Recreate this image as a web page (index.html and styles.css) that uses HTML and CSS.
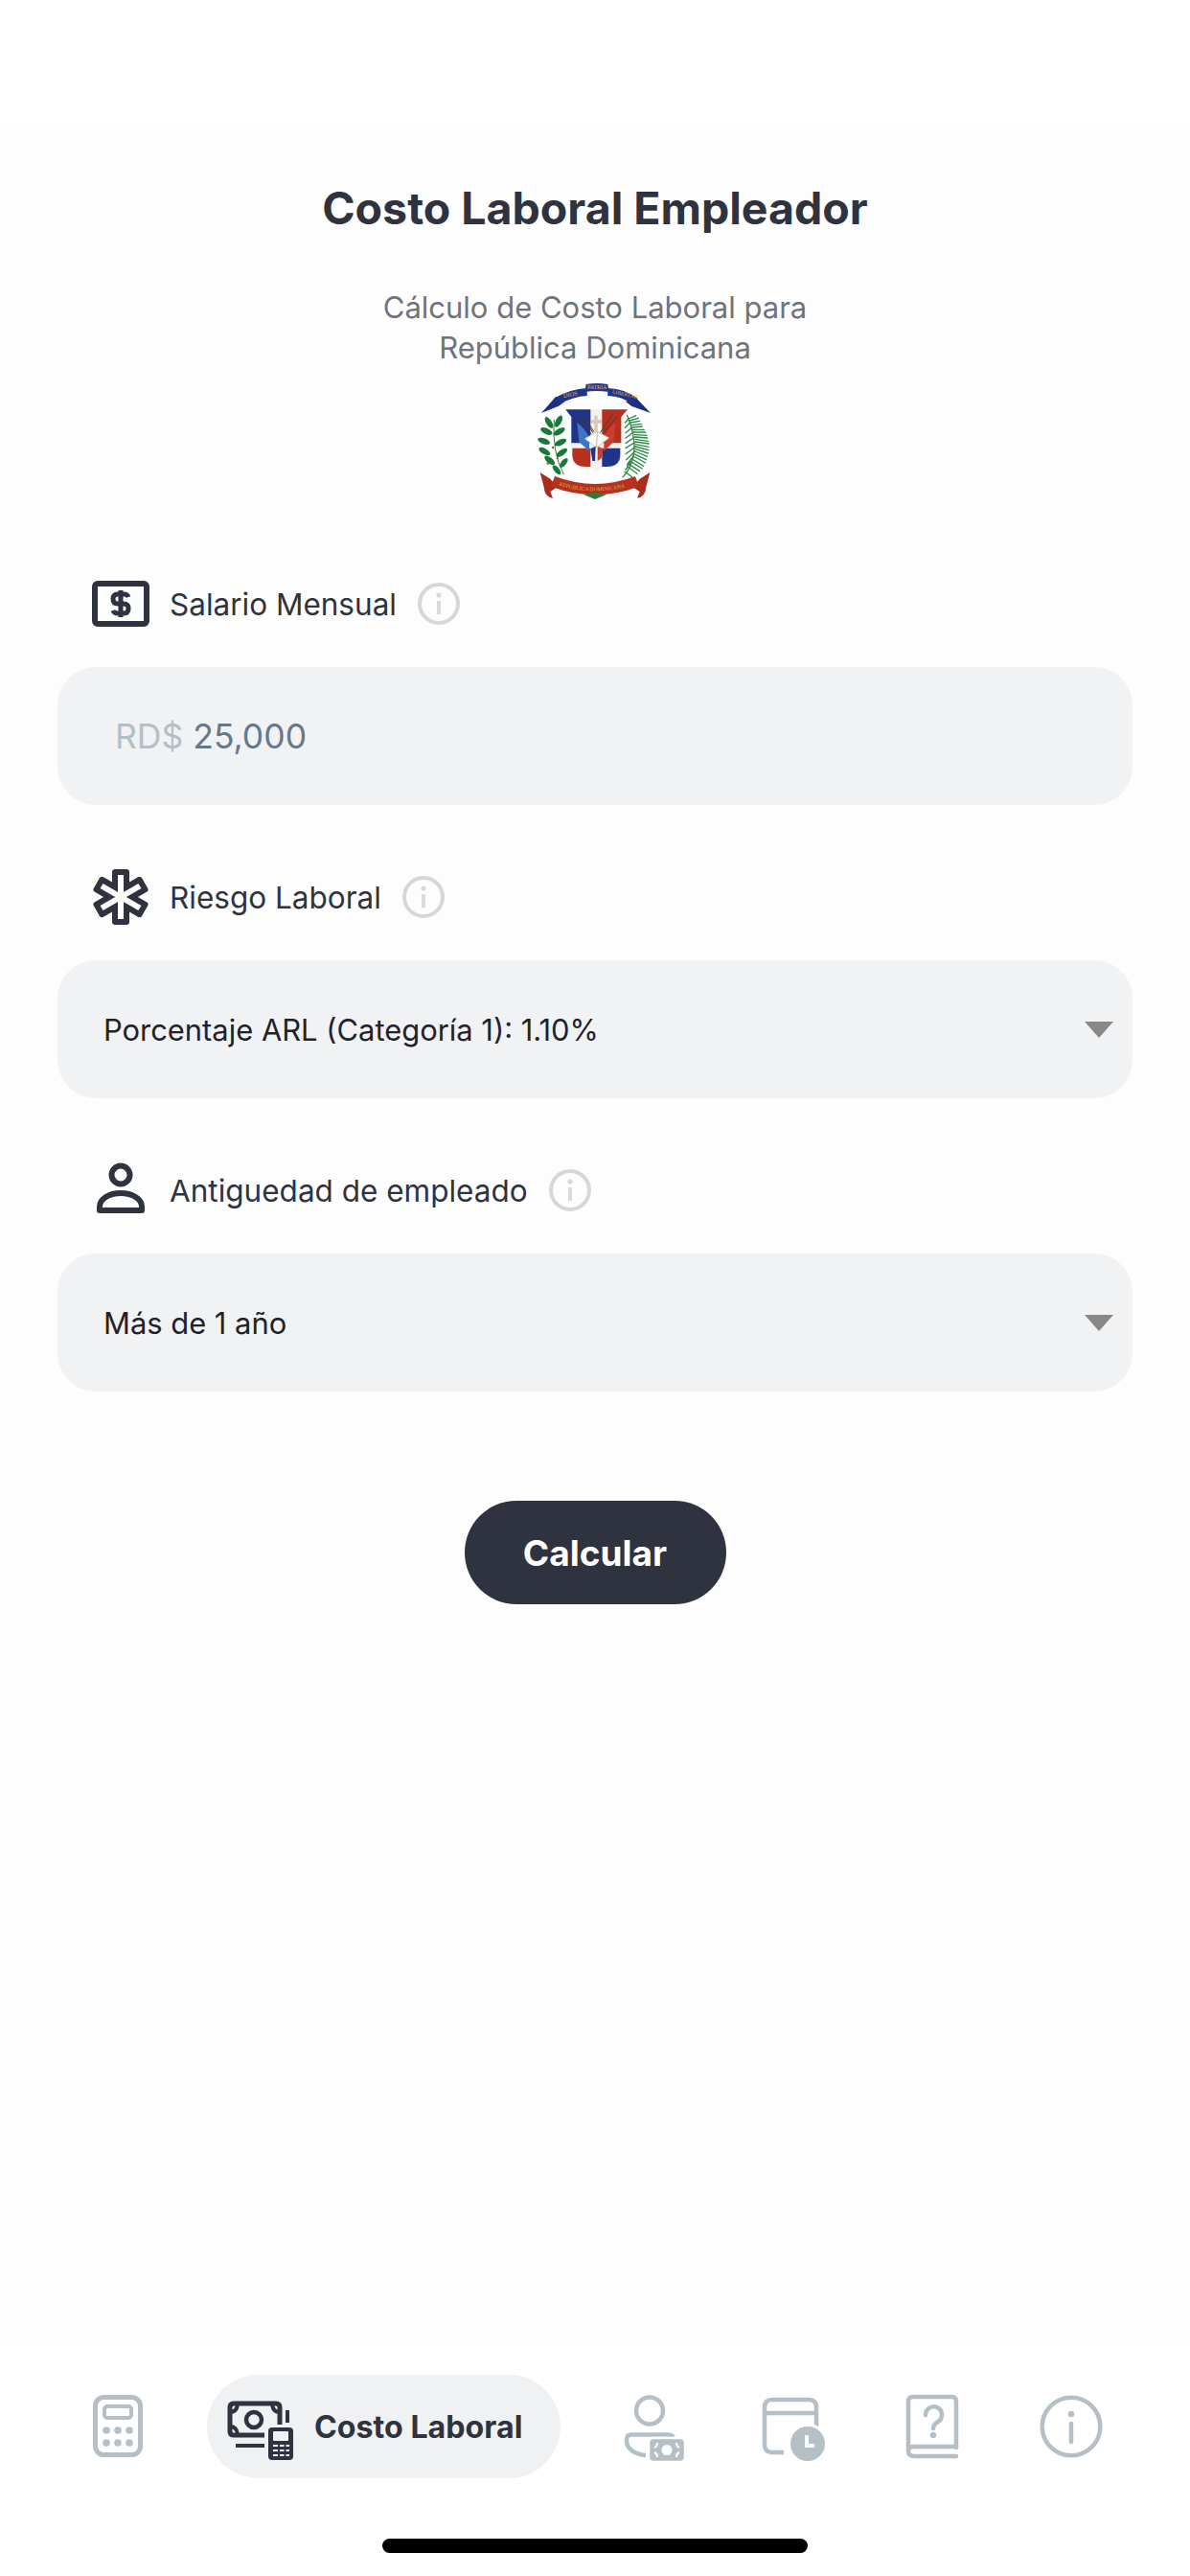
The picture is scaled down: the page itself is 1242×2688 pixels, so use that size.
FILE: index.html
```html
<!DOCTYPE html>
<html lang="es">
<head>
    <meta charset="UTF-8">
    <meta name="viewport" content="width=device-width, initial-scale=1.0">
    <link rel="stylesheet" href="styles.css">
    <title>Costo Laboral Empleador</title>
</head>
<body>
    <svg class="sprite" aria-hidden="true">
        <symbol id="info-small" viewBox="0 0 44 44">
            <circle cx="22" cy="22" r="20" fill="none" stroke="#d6d7d8" stroke-width="4"/>
            <circle cx="22" cy="13" r="2.6" fill="#d9dadb"/>
            <rect x="20" y="19" width="4" height="14" fill="#d9dadb"/>
        </symbol>
    </svg>

    <div class="container">
        <div class="status-space"></div>

        <div class="content">
            <h1 class="title">Costo Laboral Empleador</h1>
            <p class="subtitle">Cálculo de Costo Laboral para<br>República Dominicana</p>

            <!-- escudo -->
            <svg class="coat" viewBox="60 24 360 366">
                <path d="M72 120 L118 68 L146 84 L126 98 Z" fill="#1c2f80"/>
                <path d="M414 120 L366 70 L336 84 L354 98 Z" fill="#1c2f80"/>
                <path d="M118 84 Q168 56 215 54" fill="none" stroke="#1f3489" stroke-width="24"/>
                <path d="M280 54 Q330 56 366 84" fill="none" stroke="#1f3489" stroke-width="24"/>
                <path d="M212 30 Q245 24 280 30 L284 54 Q245 48 208 54 Z" fill="#22398f"/>
                <text class="coat-text" x="142" y="72" font-size="19" transform="rotate(-10 142 72)">DIOS</text>
                <text class="coat-text" x="216" y="46" font-size="18">PATRIA</text>
                <text class="coat-text" x="293" y="58" font-size="17" transform="rotate(12 293 58)">LIBERTAD</text>

                <path d="M145 107 H345 L322 132 V250 Q322 292 280 292 H258 L245 304 L232 292 H210 Q166 292 166 250 V132 Z" fill="#f4f2ef"/>
                <path d="M148 109 H226 V214 H166 V132 Z" fill="#1f3489"/>
                <path d="M262 109 H342 L322 132 V214 H262 Z" fill="#b5301f"/>
                <path d="M169 230 H226 V288 H212 Q169 288 169 250 Z" fill="#b5301f"/>
                <path d="M262 230 H319 V250 Q319 288 276 288 H262 Z" fill="#1f3489"/>
                <path d="M184 150 Q205 165 222 195 L222 240 L190 210 Z" fill="#3f74c4"/>
                <path d="M304 150 Q285 165 268 195 L268 240 L298 210 Z" fill="#c8402c"/>
                <path d="M238 128 H248 V142 H260 V152 H248 V186 H238 V152 H228 V142 H238 Z" fill="#d8c7b4"/>
                <path d="M176 124 L228 186 M194 120 L234 182 M212 138 L236 178 M296 122 L256 182 M310 130 L262 186" stroke="#4a3a2c" stroke-width="3" fill="none"/>
                <path d="M208 200 L248 178 L284 198 L244 228 Z" fill="#fbfaf6" stroke="#b9b7ae" stroke-width="2"/>
                <path d="M248 180 L244 226" stroke="#9c9a92" stroke-width="2"/>
                <path d="M226 232 L242 224 L240 270 L232 270 Z" fill="#1f3489"/>
                <path d="M248 224 L266 232 L260 262 L248 270 Z" fill="#c8402c"/>

                <path d="M142 312 Q104 240 112 140" fill="none" stroke="#3d7a3a" stroke-width="3"/>
                <g fill="#187a38">
                    <ellipse cx="96" cy="150" rx="9" ry="20" transform="rotate(-32 96 150)"/>
                    <ellipse cx="126" cy="146" rx="9" ry="20" transform="rotate(28 126 146)"/>
                    <ellipse cx="88" cy="177" rx="9" ry="20" transform="rotate(-65 88 177)"/>
                    <ellipse cx="128" cy="178" rx="9" ry="20" transform="rotate(60 128 178)"/>
                    <ellipse cx="80" cy="208" rx="9" ry="20" transform="rotate(-70 80 208)"/>
                    <ellipse cx="132" cy="212" rx="9" ry="20" transform="rotate(65 132 212)"/>
                    <ellipse cx="82" cy="240" rx="9" ry="20" transform="rotate(-60 82 240)"/>
                    <ellipse cx="136" cy="244" rx="9" ry="20" transform="rotate(55 136 244)"/>
                    <ellipse cx="98" cy="268" rx="9" ry="20" transform="rotate(-50 98 268)"/>
                    <ellipse cx="142" cy="276" rx="8" ry="18" transform="rotate(40 142 276)"/>
                    <ellipse cx="120" cy="298" rx="8" ry="18" transform="rotate(-40 120 298)"/>
                </g>
                <circle cx="108" cy="228" r="3.5" fill="#c8342a"/>
                <circle cx="92" cy="278" r="3.5" fill="#c8342a"/>
                <circle cx="122" cy="262" r="3" fill="#c8342a"/>

                <path d="M326 322 Q392 250 340 125" fill="none" stroke="#3f8a48" stroke-width="4"/>
                <g fill="none" stroke="#2b8a46" stroke-width="4" stroke-linecap="round">
                    <path d="M345 138 L368 128 M347 144 L376 136 M350 150 L380 145 M353 158 L386 154 M356 165 L388 162 M358 172 L394 172 M361 180 L398 180 M363 188 L402 190 M365 195 L404 198 M366 202 L406 208 M367 210 L408 216 M367 218 L408 226 M367 225 L408 236 M366 232 L406 246 M365 240 L404 256 M362 248 L400 266 M360 255 L398 276 M356 264 L392 286 M352 272 L388 294 M346 280 L380 302 M342 288 L372 310 M334 304 L356 320"/>
                    <path d="M345 138 L334 150 M350 150 L334 166 M356 165 L336 182 M361 180 L336 198 M365 195 L336 214 M367 210 L336 230 M367 225 L336 248 M365 240 L338 266 M360 255 L340 282 M352 272 L336 298"/>
                </g>

                <path d="M68 306 L100 326 L122 352 L100 366 L108 386 Q82 384 80 352 Z" fill="#a92c1c"/>
                <path d="M412 306 L380 326 L358 352 L380 366 L372 386 Q398 384 400 352 Z" fill="#a92c1c"/>
                <path d="M108 334 Q240 384 372 334" fill="none" stroke="#b5301f" stroke-width="34"/>
                <path d="M205 376 L240 390 L275 376 L240 368 Z" fill="#2f7a3a"/>
                <path id="ribbon-text" d="M108 340 Q240 388 374 340" fill="none"/>
                <text class="coat-text" font-size="17"><textPath href="#ribbon-text" startOffset="20">REPUBLICA DOMINICANA</textPath></text>
            </svg>

            <div class="field">
                <div class="field-label">
                    <svg class="field-icon" viewBox="0 0 60 60">
                        <rect x="3" y="9" width="54" height="42" rx="3" fill="none" stroke="#2f3340" stroke-width="6"/>
                        <path d="M38 23 Q37 20 33 20 H27 Q22 20 22 25 Q22 30 27 30 H33 Q38 30 38 35 Q38 40 33 40 H27 Q23 40 22 37 M30 16 V44" fill="none" stroke="#2f3340" stroke-width="5"/>
                    </svg>
                    <span>Salario Mensual</span>
                    <svg class="info-icon"><use href="#info-small"/></svg>
                </div>
                <div class="input-box"><span class="prefix">RD$</span> <span class="amount">25,000</span></div>
            </div>

            <div class="field">
                <div class="field-label">
                    <svg class="field-icon" viewBox="0 0 60 60">
                        <g fill="#2f3340">
                            <rect x="21" y="1" width="18" height="58" rx="3"/>
                            <rect x="21" y="1" width="18" height="58" rx="3" transform="rotate(60 30 30)"/>
                            <rect x="21" y="1" width="18" height="58" rx="3" transform="rotate(120 30 30)"/>
                        </g>
                        <g fill="#fdfdfd">
                            <rect x="27" y="7" width="6" height="46"/>
                            <rect x="27" y="7" width="6" height="46" transform="rotate(60 30 30)"/>
                            <rect x="27" y="7" width="6" height="46" transform="rotate(120 30 30)"/>
                        </g>
                    </svg>
                    <span>Riesgo Laboral</span>
                    <svg class="info-icon"><use href="#info-small"/></svg>
                </div>
                <div class="select-box">
                    <span>Porcentaje ARL (Categoría 1): 1.10%</span>
                    <div class="arrow"></div>
                </div>
            </div>

            <div class="field">
                <div class="field-label">
                    <svg class="field-icon" viewBox="0 0 60 60">
                        <circle cx="30" cy="14" r="9.5" fill="none" stroke="#2f3340" stroke-width="6"/>
                        <path d="M8 51 V47 C8 39 18 33 30 33 C42 33 52 39 52 47 V51 Z" fill="none" stroke="#2f3340" stroke-width="6" stroke-linejoin="round"/>
                    </svg>
                    <span>Antiguedad de empleado</span>
                    <svg class="info-icon"><use href="#info-small"/></svg>
                </div>
                <div class="select-box">
                    <span>Más de 1 año</span>
                    <div class="arrow"></div>
                </div>
            </div>

            <button class="calc-button" type="button">Calcular</button>
        </div>

        <div class="bottom-bar">
            <div class="tabs">
                <a class="tab" href="#">
                    <svg class="tab-icon" viewBox="0 0 80 80" fill="none" stroke="#b5bfc6" stroke-width="5">
                        <rect x="16.5" y="9.5" width="47" height="60" rx="9"/>
                        <rect x="26" y="19" width="28" height="12" rx="3" stroke-width="4"/>
                        <g fill="#b5bfc6" stroke="none">
                            <circle cx="28" cy="44" r="3.8"/><circle cx="40" cy="44" r="3.8"/><circle cx="52" cy="44" r="3.8"/>
                            <circle cx="28" cy="57" r="3.8"/><circle cx="40" cy="57" r="3.8"/><circle cx="52" cy="57" r="3.8"/>
                        </g>
                    </svg>
                </a>

                <a class="tab-active" href="#">
                    <svg class="tab-icon" viewBox="0 0 80 80" fill="none" stroke="#2f3340" stroke-width="5">
                        <path d="M44 49 H12 Q8 49 8 45 V20 Q8 16 12 16 H56 Q60 16 60 20 V38"/>
                        <path d="M8 25 Q15 25 16 17 M52 17 Q53 25 60 25 M8 40 Q15 40 16 48" stroke-width="4"/>
                        <circle cx="33" cy="33" r="8" stroke-width="4.5"/>
                        <path d="M68 23 V36 M14 60 H44" stroke-width="4"/>
                        <rect x="48" y="41" width="26" height="34" rx="4" fill="#2f3340" stroke="none"/>
                        <rect x="53" y="45" width="16" height="10" rx="1" fill="#f0f1f3" stroke="none"/>
                        <path d="M53 60 H58 M60 60 H64.5 M66.5 60 H70 M53 65 H58 M60 65 H64.5 M66.5 65 H70 M53 70 H58 M60 70 H64.5 M66.5 70 H70" stroke="#f0f1f3" stroke-width="2"/>
                    </svg>
                    <span>Costo Laboral</span>
                </a>

                <a class="tab" href="#">
                    <svg class="tab-icon" viewBox="0 0 80 80" fill="none" stroke="#b5bfc6" stroke-width="4.5">
                        <circle cx="35" cy="23.5" r="14"/>
                        <path d="M60 51 Q58 48.5 54 48.5 H16 Q11 48.5 11 53.5 V55 C11 63 19 69 31 70"/>
                        <rect x="34" y="52" width="38" height="25" rx="5" fill="#b5bfc6" stroke="#fff" stroke-width="2.5"/>
                        <circle cx="53" cy="64.5" r="5.5" fill="#fff" stroke="none"/>
                        <path d="M40 62 Q43 61 43 57 M66 62 Q63 61 63 57 M40 67 Q43 68 43 72 M66 67 Q63 68 63 72" stroke="#fff" stroke-width="2"/>
                    </svg>
                </a>

                <a class="tab" href="#">
                    <svg class="tab-icon" viewBox="0 0 80 80" fill="none" stroke="#b5bfc6" stroke-width="4.5">
                        <path d="M30 67 H18 Q10 67 10 59 V20 Q10 12 18 12 H56 Q64 12 64 20 V40 M10 26 H64"/>
                        <circle cx="55" cy="58" r="19.5" fill="#b5bfc6" stroke="#fff" stroke-width="3"/>
                        <path d="M54 49 V60 H62" stroke="#fff" stroke-width="4"/>
                    </svg>
                </a>

                <a class="tab" href="#">
                    <svg class="tab-icon" viewBox="0 0 80 80" fill="none" stroke="#b5bfc6" stroke-width="4.5" stroke-linecap="round">
                        <path d="M65 62 V14 Q65 9 60 9 H20 Q15 9 15 14 V65 Q15 71 21 71 H65"/>
                        <path d="M15 65 Q15 61 20 61 H65"/>
                        <path d="M33 28 A8.5 8.5 0 1 1 46 35 Q41 38 41 42"/>
                        <circle cx="41" cy="49" r="3.2" fill="#b5bfc6" stroke="none"/>
                    </svg>
                </a>

                <a class="tab" href="#">
                    <svg class="tab-icon" viewBox="0 0 80 80" fill="none" stroke="#b5bfc6" stroke-width="4.5" stroke-linecap="round">
                        <circle cx="40" cy="40" r="30.3"/>
                        <circle cx="40" cy="27" r="3.2" fill="#b5bfc6" stroke="none"/>
                        <path d="M40 37 V56"/>
                    </svg>
                </a>
            </div>
            <div class="home-indicator"></div>
        </div>
    </div>
</body>
</html>
```

FILE: styles.css
```css
body {
    font-family: Inter, "Noto Sans", sans-serif;
    margin: 0;
    padding: 0;
    background: #fff;
    color: #2f3340;
}

.sprite {
    display: none;
}

.container {
    display: flex;
    flex-direction: column;
    width: 1242px;
    height: 2688px;
    overflow: hidden;
}

.status-space {
    height: 130px;
    background: #fff;
}

.content {
    flex: 1;
    display: flex;
    flex-direction: column;
    align-items: center;
    padding: 60px 60px 0;
    background: #fdfdfd;
}

.title {
    margin: 0;
    font-size: 46.5px;
    line-height: 54px;
    font-weight: 700;
    color: #2f3340;
}

.subtitle {
    margin: 56px 0 0;
    font-size: 31px;
    line-height: 42px;
    text-align: center;
    color: #6f737c;
}

.coat {
    width: 120px;
    height: 122px;
    margin-top: 15px;
    margin-bottom: 13px;
}

.coat-text {
    font-family: "Liberation Serif", serif;
    fill: #e2b53c;
}

.field {
    width: 100%;
    margin-top: 66px;
}

.field-label {
    display: flex;
    align-items: center;
    height: 60px;
    padding-left: 36px;
    margin-bottom: 36px;
    font-size: 31.5px;
    color: #2f3340;
}

.field-icon {
    width: 60px;
    height: 60px;
    margin-right: 21px;
}

.info-icon {
    width: 44px;
    height: 44px;
    margin-left: 22px;
}

.input-box,
.select-box {
    display: flex;
    align-items: center;
    height: 144px;
    border-radius: 40px;
    background: #f1f2f4;
    box-sizing: border-box;
}

.input-box {
    padding-left: 60px;
    font-size: 35.5px;
    gap: 10px;
}

.prefix {
    color: #b3bfc6;
}

.amount {
    color: #64798a;
}

.select-box {
    justify-content: space-between;
    padding: 0 20px 0 48px;
    font-size: 30.9px;
    color: #1f222b;
}

.arrow {
    width: 0;
    height: 0;
    border-left: 15px solid transparent;
    border-right: 15px solid transparent;
    border-top: 17px solid #888;
}

.calc-button {
    width: 273px;
    height: 108px;
    margin-top: 114px;
    border: none;
    border-radius: 54px;
    background: #2f3340;
    color: #fff;
    font-family: inherit;
    font-size: 37px;
    font-weight: 700;
}

.bottom-bar {
    height: 240px;
    background: #fff;
    display: flex;
    flex-direction: column;
}

.tabs {
    display: flex;
    align-items: center;
    height: 108px;
    margin-top: 30px;
    padding-left: 50px;
}

.tab {
    display: flex;
    justify-content: center;
    align-items: center;
    width: 145px;
}

.tab-icon {
    width: 80px;
    height: 80px;
    flex-shrink: 0;
}

.tab-active {
    display: flex;
    align-items: center;
    width: 369px;
    height: 108px;
    margin: 0 25px 0 21px;
    padding-left: 16px;
    box-sizing: border-box;
    border-radius: 54px;
    background: #f0f1f3;
    color: #2f3340;
    font-size: 32.2px;
    font-weight: 700;
    text-decoration: none;
    white-space: nowrap;
}

.tab-active span {
    margin-left: 16px;
}

.home-indicator {
    width: 444px;
    height: 15px;
    margin: 63px auto 0;
    border-radius: 8px;
    background: #000;
}
```
